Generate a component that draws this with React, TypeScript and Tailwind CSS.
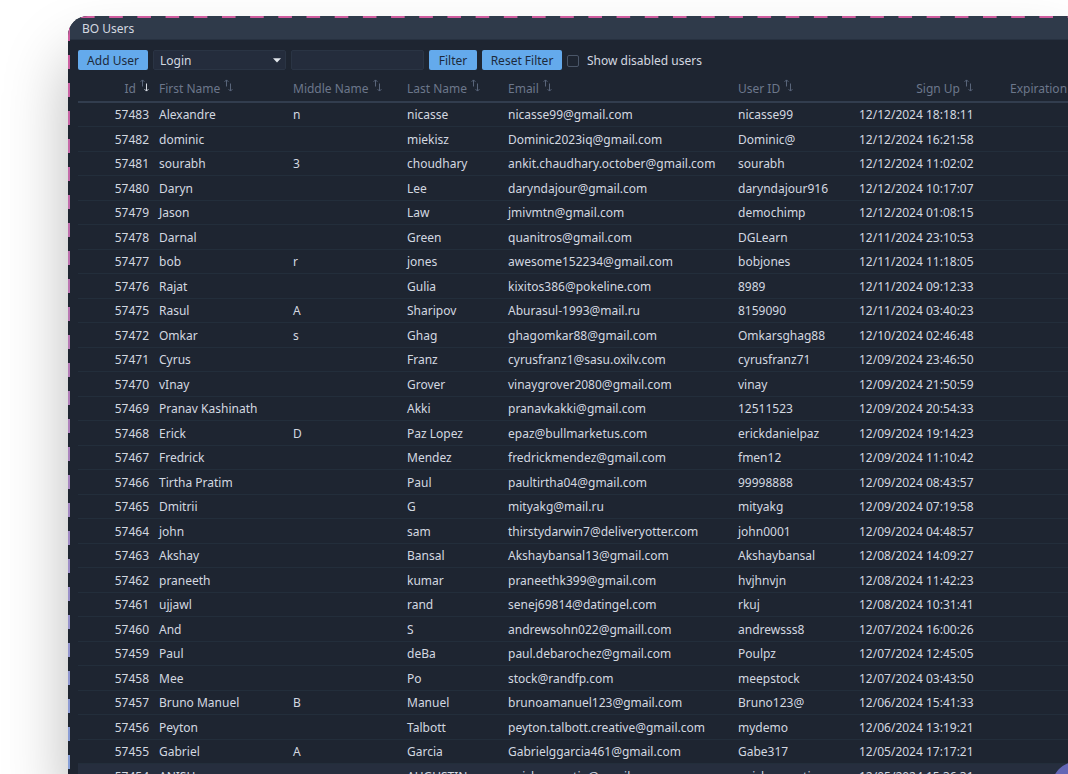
const rows: string[][] = [
  ["57483", "Alexandre", "n", "nicasse", "nicasse99@gmail.com", "nicasse99", "12/12/2024 18:18:11"],
  ["57482", "dominic", "", "miekisz", "Dominic2023iq@gmail.com", "Dominic@", "12/12/2024 16:21:58"],
  ["57481", "sourabh", "3", "choudhary", "ankit.chaudhary.october@gmail.com", "sourabh", "12/12/2024 11:02:02"],
  ["57480", "Daryn", "", "Lee", "daryndajour@gmail.com", "daryndajour916", "12/12/2024 10:17:07"],
  ["57479", "Jason", "", "Law", "jmivmtn@gmail.com", "demochimp", "12/12/2024 01:08:15"],
  ["57478", "Darnal", "", "Green", "quanitros@gmail.com", "DGLearn", "12/11/2024 23:10:53"],
  ["57477", "bob", "r", "jones", "awesome152234@gmail.com", "bobjones", "12/11/2024 11:18:05"],
  ["57476", "Rajat", "", "Gulia", "kixitos386@pokeline.com", "8989", "12/11/2024 09:12:33"],
  ["57475", "Rasul", "A", "Sharipov", "Aburasul-1993@mail.ru", "8159090", "12/11/2024 03:40:23"],
  ["57472", "Omkar", "s", "Ghag", "ghagomkar88@gmail.com", "Omkarsghag88", "12/10/2024 02:46:48"],
  ["57471", "Cyrus", "", "Franz", "cyrusfranz1@sasu.oxilv.com", "cyrusfranz71", "12/09/2024 23:46:50"],
  ["57470", "vInay", "", "Grover", "vinaygrover2080@gmail.com", "vinay", "12/09/2024 21:50:59"],
  ["57469", "Pranav Kashinath", "", "Akki", "pranavkakki@gmail.com", "12511523", "12/09/2024 20:54:33"],
  ["57468", "Erick", "D", "Paz Lopez", "epaz@bullmarketus.com", "erickdanielpaz", "12/09/2024 19:14:23"],
  ["57467", "Fredrick", "", "Mendez", "fredrickmendez@gmail.com", "fmen12", "12/09/2024 11:10:42"],
  ["57466", "Tirtha Pratim", "", "Paul", "paultirtha04@gmail.com", "99998888", "12/09/2024 08:43:57"],
  ["57465", "Dmitrii", "", "G", "mityakg@mail.ru", "mityakg", "12/09/2024 07:19:58"],
  ["57464", "john", "", "sam", "thirstydarwin7@deliveryotter.com", "john0001", "12/09/2024 04:48:57"],
  ["57463", "Akshay", "", "Bansal", "Akshaybansal13@gmail.com", "Akshaybansal", "12/08/2024 14:09:27"],
  ["57462", "praneeth", "", "kumar", "praneethk399@gmail.com", "hvjhnvjn", "12/08/2024 11:42:23"],
  ["57461", "ujjawl", "", "rand", "senej69814@datingel.com", "rkuj", "12/08/2024 10:31:41"],
  ["57460", "And", "", "S", "andrewsohn022@gmaill.com", "andrewsss8", "12/07/2024 16:00:26"],
  ["57459", "Paul", "", "deBa", "paul.debarochez@gmail.com", "Poulpz", "12/07/2024 12:45:05"],
  ["57458", "Mee", "", "Po", "stock@randfp.com", "meepstock", "12/07/2024 03:43:50"],
  ["57457", "Bruno Manuel", "B", "Manuel", "brunoamanuel123@gmail.com", "Bruno123@", "12/06/2024 15:41:33"],
  ["57456", "Peyton", "", "Talbott", "peyton.talbott.creative@gmail.com", "mydemo", "12/06/2024 13:19:21"],
  ["57455", "Gabriel", "A", "Garcia", "Gabrielggarcia461@gmail.com", "Gabe317", "12/05/2024 17:17:21"],
  ["57454", "ANISH", "", "AUGUSTIN", "anishaugustin@gmail.com", "anishaugustin", "12/05/2024 15:36:31"],
];

const columns = [
  { label: "Id", width: "w-[76px]", right: true },
  { label: "First Name", width: "w-[134px]", right: false },
  { label: "Middle Name", width: "w-[114px]", right: false },
  { label: "Last Name", width: "w-[101px]", right: false },
  { label: "Email", width: "w-[230px]", right: false },
  { label: "User ID", width: "w-[121px]", right: false },
  { label: "Sign Up", width: "w-[124px]", right: true },
];

function SortIcon({ active }: { active: boolean }) {
  return (
    <svg width="9" height="13" viewBox="0 0 9 13" fill="none" className="ml-1 inline-block shrink-0" aria-hidden="true">
      <path d="M2.5 7.5V1M0.6 2.8L2.5 0.9L4.4 2.8" stroke="#59657a" />
      <path d="M6.5 4.5V12M4.6 10.2L6.5 12.1L8.4 10.2" stroke={active ? "#d5dae2" : "#59657a"} />
    </svg>
  );
}

const buttonClass = "h-5 rounded-xs bg-[#64aaec] pt-0.5 text-center text-[#1d2a3c]";

export default function App() {
  return (
    <div className="relative h-screen overflow-hidden bg-white pt-4 pl-[68px] font-['Noto_Sans','Open_Sans',sans-serif] text-xs text-[#d3d8e0]">
      <main className="relative h-full overflow-hidden rounded-tl-[20px] bg-[#1e2531] shadow-[0_40px_64px_rgba(0,0,0,0.28)]">
        <div className="absolute top-0 right-0 left-[13px] h-0.5 bg-[linear-gradient(90deg,#cf5c9e_50%,transparent_50%)] bg-size-[28px_2px] bg-repeat-round" />
        <h1 className="flex h-6 items-center border-b border-[#273140] bg-[#2f3a4a] pt-0.5 pl-3.5">BO Users</h1>
        <form className="flex items-center gap-[5px] pt-2.5 pl-2.5" onSubmit={(e) => e.preventDefault()}>
          <button type="button" className={`${buttonClass} w-[70px]`}>Add User</button>
          <div className="relative">
            <select aria-label="Filter field" className="block h-5 w-[133px] appearance-none rounded-xs border border-[#2a3444] bg-[#242c3c] pt-0.5 pl-1.5">
              <option>Login</option>
            </select>
            <svg width="8" height="5" viewBox="0 0 8 5" className="pointer-events-none absolute top-2 right-[5px]" aria-hidden="true">
              <path d="M0 0.3H8L4 4.4Z" fill="#e2e6ec" />
            </svg>
          </div>
          <input type="text" aria-label="Filter value" className="h-5 w-[133px] rounded-xs border border-[#2a3444] bg-[#242c3c] px-1.5" />
          <button type="submit" className={`${buttonClass} w-12`}>Filter</button>
          <button type="reset" className={`${buttonClass} w-20`}>Reset Filter</button>
          <label className="flex items-center gap-2 pt-0.5">
            <input type="checkbox" className="size-3 appearance-none rounded-xs border border-[#4a5668] checked:bg-[#64aaec]" />
            Show disabled users
          </label>
        </form>
        <div className="pl-2.5">
          <table className="w-full table-fixed border-collapse whitespace-nowrap">
            <thead>
              <tr className="h-8 border-b-2 border-[#323d4e] text-[#6c778b]">
                {columns.map((c) => (
                  <th key={c.label} className={`${c.width} px-[5px] pt-1 pb-0 font-normal`}>
                    <div className={`flex items-start ${c.right ? "justify-end" : "justify-start"}`}>
                      <span className="pt-0.5">{c.label}</span>
                      <SortIcon active={c.label === "Id"} />
                    </div>
                  </th>
                ))}
                <th className="overflow-hidden pt-1.5 pb-0 pl-8 text-left font-normal">Expiration Date</th>
              </tr>
            </thead>
            <tbody>
              {rows.map((row) => (
                <tr key={row[0]} className="h-6 border-b border-[#232e3b] last:bg-[#262e3e] even:h-[25px]">
                  {row.map((cell, i) => (
                    <td key={i} className={`px-[5px] pt-0.5 pb-0 ${columns[i].right ? "text-right" : "text-left"}`}>{cell}</td>
                  ))}
                  <td />
                </tr>
              ))}
            </tbody>
          </table>
        </div>
        <div className="absolute top-0 bottom-0 left-0 w-0.5 bg-[linear-gradient(#cf5c9e,#b57bb5_45%,#85a0d8)] mask-[repeating-linear-gradient(transparent_0_11px,black_11px_25px,transparent_25px_28px)]" />
      </main>
      <button type="button" aria-label="Open chat" className="absolute -right-8 -bottom-9 size-12 rounded-full bg-[#6366b5]" />
    </div>
  );
}
